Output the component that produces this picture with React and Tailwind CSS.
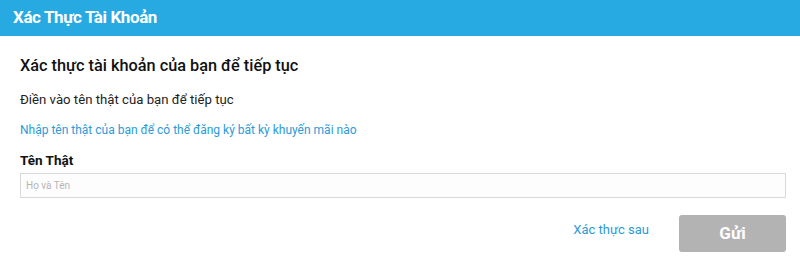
export default function App() {
  return (
    <div className="w-[800px] h-[264px] bg-white overflow-hidden" style={{ fontFamily: 'Roboto, "Open Sans", sans-serif' }}>
      <div className="h-[36px] bg-[#27a9e1] flex items-center px-[13px]">
        <h1 className="text-white text-[17px] font-bold tracking-[-0.4px]">Xác Thực Tài Khoản</h1>
      </div>
      <div className="pl-[20px] pr-[14px] pt-[17px]">
        <h2 className="text-[16.3px] font-medium text-[#111] leading-[26px]">
          Xác thực tài khoản của bạn để tiếp tục
        </h2>
        <p className="mt-[11px] text-[13.2px] text-[#222] leading-[20px]">
          Điền vào tên thật của bạn để tiếp tục
        </p>
        <p className="mt-[10px] text-[12px] text-[#2a9ad8] leading-[20px]">
          Nhập tên thật của bạn để có thể đăng ký bất kỳ khuyến mãi nào
        </p>
        <label className="block mt-[10px] text-[13.5px] font-bold text-[#111] leading-[20px]">
          Tên Thật
        </label>
        <input
          type="text"
          placeholder="Họ và Tên"
          className="mt-[3px] w-full h-[25px] border border-[#d9d9d9] bg-[#fdfdfd] px-[5px] text-[10px] placeholder:text-[#b5b5b5] outline-none"
        />
        <div className="flex items-center justify-end gap-[30px] mt-[17px]">
          <a className="text-[13px] text-[#2a9ad8] -mt-[8px]">Xác thực sau</a>
          <button className="w-[107px] h-[37px] rounded-[3px] bg-[#b3b3b3] text-white text-[17px] font-bold">
            Gửi
          </button>
        </div>
      </div>
    </div>
  );
}
